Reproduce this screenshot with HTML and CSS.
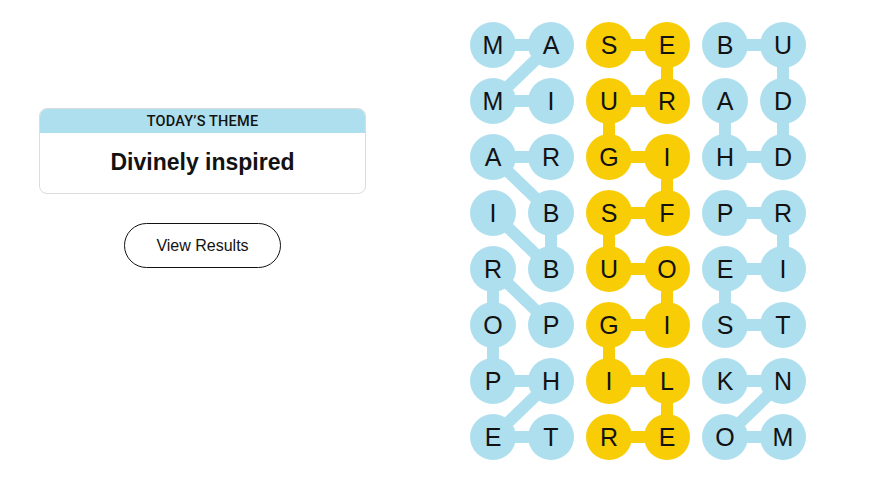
FILE: index.html
```html
<!DOCTYPE html>
<html lang="en">
<head>
<meta charset="utf-8">
<title>Strands</title>
<link rel="stylesheet" href="styles.css">
</head>
<body>
<main class="page">
  <section class="left">
    <div class="theme-card">
      <div class="theme-head"><span class="theme-label">TODAY’S THEME</span></div>
      <div class="theme-body">Divinely inspired</div>
    </div>
    <button class="results-btn">View Results</button>
  </section>
  <section class="board">
    <svg class="links" width="336" height="415" viewBox="0 0 336 415">
      <g class="blue">
        <!-- IMAM -->
        <line x1="23" y1="23" x2="81" y2="23"/>
        <line x1="81" y1="23" x2="23" y2="79"/>
        <line x1="23" y1="79" x2="81" y2="79"/>
        <!-- RABBI -->
        <line x1="23" y1="135" x2="81" y2="135"/>
        <line x1="23" y1="135" x2="81" y2="191"/>
        <line x1="81" y1="191" x2="81" y2="247"/>
        <line x1="81" y1="247" x2="23" y2="191"/>
        <!-- PROPHET -->
        <line x1="81" y1="303" x2="23" y2="247"/>
        <line x1="23" y1="247" x2="23" y2="303"/>
        <line x1="23" y1="303" x2="23" y2="359"/>
        <line x1="23" y1="359" x2="81" y2="359"/>
        <line x1="81" y1="359" x2="23" y2="415"/>
        <line x1="23" y1="415" x2="81" y2="415"/>
        <!-- BUDDHA -->
        <line x1="255" y1="23" x2="313" y2="23"/>
        <line x1="313" y1="23" x2="313" y2="135"/>
        <line x1="313" y1="135" x2="255" y2="135"/>
        <line x1="255" y1="135" x2="255" y2="79"/>
        <!-- PRIEST -->
        <line x1="255" y1="191" x2="313" y2="191"/>
        <line x1="313" y1="191" x2="313" y2="247"/>
        <line x1="313" y1="247" x2="255" y2="247"/>
        <line x1="255" y1="247" x2="255" y2="303"/>
        <line x1="255" y1="303" x2="313" y2="303"/>
        <!-- MONK -->
        <line x1="313" y1="415" x2="255" y2="415"/>
        <line x1="255" y1="415" x2="313" y2="359"/>
        <line x1="313" y1="359" x2="255" y2="359"/>
      </g>
      <g class="yellow">
        <polyline points="139,415 197,415 197,359 139,359 139,303 197,303 197,247 139,247 139,191 197,191 197,135 139,135 139,79 197,79 197,23 139,23"/>
      </g>
    </svg>
    <div class="grid">
      <span class="cell blue">M</span><span class="cell blue">A</span><span class="cell gold">S</span><span class="cell gold">E</span><span class="cell blue">B</span><span class="cell blue">U</span>
      <span class="cell blue">M</span><span class="cell blue">I</span><span class="cell gold">U</span><span class="cell gold">R</span><span class="cell blue">A</span><span class="cell blue">D</span>
      <span class="cell blue">A</span><span class="cell blue">R</span><span class="cell gold">G</span><span class="cell gold">I</span><span class="cell blue">H</span><span class="cell blue">D</span>
      <span class="cell blue">I</span><span class="cell blue">B</span><span class="cell gold">S</span><span class="cell gold">F</span><span class="cell blue">P</span><span class="cell blue">R</span>
      <span class="cell blue">R</span><span class="cell blue">B</span><span class="cell gold">U</span><span class="cell gold">O</span><span class="cell blue">E</span><span class="cell blue">I</span>
      <span class="cell blue">O</span><span class="cell blue">P</span><span class="cell gold">G</span><span class="cell gold">I</span><span class="cell blue">S</span><span class="cell blue">T</span>
      <span class="cell blue">P</span><span class="cell blue">H</span><span class="cell gold">I</span><span class="cell gold">L</span><span class="cell blue">K</span><span class="cell blue">N</span>
      <span class="cell blue">E</span><span class="cell blue">T</span><span class="cell gold">R</span><span class="cell gold">E</span><span class="cell blue">O</span><span class="cell blue">M</span>
    </div>
  </section>
</main>
</body>
</html>
```

FILE: styles.css
```css
* { box-sizing: border-box; }
html, body {
  margin: 0;
  padding: 0;
  background: #ffffff;
  color: #121212;
  font-family: "Liberation Sans", Arial, sans-serif;
}
.page {
  display: flex;
  align-items: flex-start;
  padding-left: 39px;
}
.left {
  width: 327px;
  margin-top: 108px;
  display: flex;
  flex-direction: column;
  align-items: center;
}
.theme-card {
  width: 327px;
  border: 1px solid #dcdcdc;
  border-radius: 8px;
  overflow: hidden;
}
.theme-head {
  background: #aedfee;
  height: 24px;
  line-height: 24px;
  text-align: center;
}
.theme-label {
  font-family: Roboto, "Liberation Sans", sans-serif;
  font-size: 14.5px;
  font-weight: 500;
  letter-spacing: 0.2px;
  color: #121212;
}
.theme-body {
  height: 60px;
  display: flex;
  align-items: center;
  justify-content: center;
  font-size: 23px;
  font-weight: 700;
  padding-bottom: 2px;
}
.results-btn {
  margin-top: 29px;
  width: 157px;
  height: 45px;
  border: 1px solid #121212;
  border-radius: 23px;
  background: #fff;
  font-family: "Liberation Sans", Arial, sans-serif;
  font-size: 16px;
  color: #121212;
  padding: 0;
  cursor: pointer;
}
.board {
  position: relative;
  margin-left: 104px;
  margin-top: 22px;
}
.links {
  position: absolute;
  left: 0;
  top: 0;
  overflow: visible;
}
.links line, .links polyline {
  stroke-width: 12;
  fill: none;
}
.links .blue line { stroke: #aedfee; }
.links .yellow polyline { stroke: #f8cd05; stroke-linejoin: miter; }
.grid {
  position: relative;
  display: grid;
  grid-template-columns: repeat(6, 46px);
  grid-auto-rows: 46px;
  column-gap: 12px;
  row-gap: 10px;
}
.cell {
  width: 46px;
  height: 46px;
  border-radius: 50%;
  display: flex;
  align-items: center;
  justify-content: center;
  font-size: 25px;
  color: #121212;
}
.cell.blue { background: #aedfee; }
.cell.gold { background: #f8cd05; }
```
